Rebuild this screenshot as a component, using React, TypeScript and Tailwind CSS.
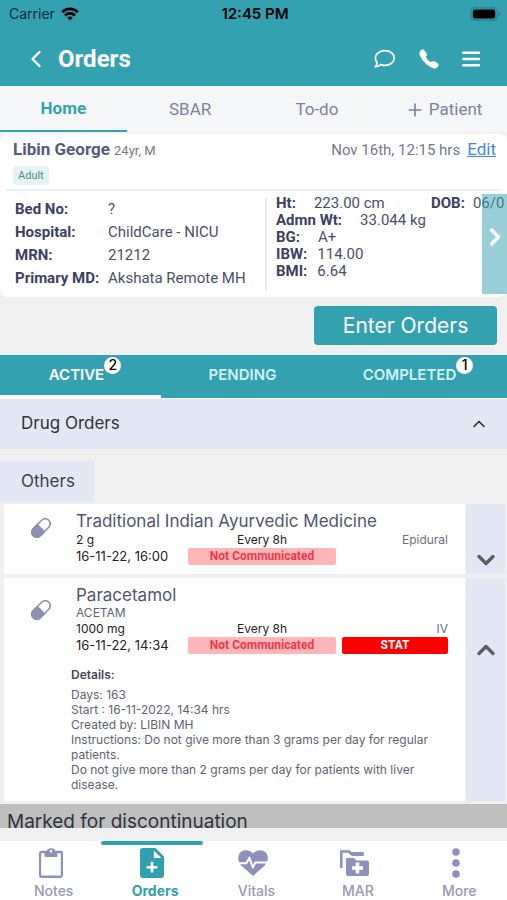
import React from "react";
import { IoCall } from "react-icons/io5";
import { ChevronDown, ChevronLeft, ChevronRight, ChevronUp, Plus } from "lucide-react";

const inter = "font-['Inter',sans-serif]";
const roboto = "font-['Roboto',sans-serif]";

function WifiIcon() {
  return (
    <svg viewBox="0 0 18 14" className="h-[14px] w-[18px]" aria-hidden="true">
      <g fill="none" stroke="#000" strokeWidth="2.7">
        <path d="M1.2 5.2 A11 11 0 0 1 16.8 5.2" />
        <path d="M4 8.5 A7.1 7.1 0 0 1 14 8.5" />
      </g>
      <path d="M9 13.6 L6.2 10.8 A4 4 0 0 1 11.8 10.8 Z" />
    </svg>
  );
}

function BatteryIcon() {
  return (
    <svg viewBox="0 0 31 14" className="h-[14px] w-[31px]" aria-hidden="true">
      <rect x="0.8" y="0.8" width="26.4" height="12.4" rx="4" fill="none" stroke="#23808c" strokeWidth="1.2" />
      <rect x="2.8" y="2.6" width="22.4" height="8.8" rx="2.2" />
      <path d="M28.6 4.8 Q30.6 5.6 30.6 7 T28.6 9.2Z" fill="#23808c" />
    </svg>
  );
}

function ChatIcon() {
  return (
    <svg viewBox="0 0 22 20" className="h-5 w-[22px]" fill="none" aria-hidden="true">
      <path
        d="M11 1.6 C16 1.6 20.2 4.8 20.2 9 S16 16.4 11 16.4 C9.4 16.4 8 16.1 6.8 15.6 C5.2 16.9 3.2 17.8 1.3 17.8 C2.3 16.7 3 15.1 3.1 13.6 C2 12.4 1.4 10.8 1.4 9 C1.4 4.8 6 1.6 11 1.6Z"
        stroke="currentColor"
        strokeWidth="1.7"
        strokeLinejoin="round"
      />
    </svg>
  );
}

function MenuIcon() {
  return (
    <svg viewBox="0 0 18 16" className="h-4 w-[18px]" aria-hidden="true">
      <path d="M1 1.8 H17 M1 8 H17 M1 14.2 H17" stroke="currentColor" strokeWidth="2.4" strokeLinecap="round" />
    </svg>
  );
}

function PillIcon() {
  return (
    <svg viewBox="0 0 20 20" className="h-5 w-5" aria-hidden="true">
      <g transform="rotate(-45 10 10)">
        <rect x="-1" y="5" width="22" height="10" rx="5" fill="none" stroke="#8d90b4" strokeWidth="1.6" />
        <path d="M10.5 4.2 H4 A5.8 5.8 0 0 0 4 15.8 H10.5Z" fill="#8d90b4" />
      </g>
    </svg>
  );
}

function NotesIcon() {
  return (
    <svg viewBox="0 0 24 30" className="h-[30px] w-6" fill="#8d91bb" aria-hidden="true">
      <path
        fillRule="evenodd"
        d="M2.4 2.8 H7.6 A4.6 3.6 0 0 1 16.4 2.8 H21.6 A2.4 2.4 0 0 1 24 5.2 V27.6 A2.4 2.4 0 0 1 21.6 30 H2.4 A2.4 2.4 0 0 1 0 27.6 V5.2 A2.4 2.4 0 0 1 2.4 2.8Z M2.2 5.2 V27.6 H21.8 V5.2 H18.4 V9 H5.6 V5.2Z M12 2 A1.3 1.3 0 1 0 12 4.6 A1.3 1.3 0 1 0 12 2Z"
      />
    </svg>
  );
}

function OrdersIcon() {
  return (
    <svg viewBox="0 0 24 30" className="h-[30px] w-6" aria-hidden="true">
      <path fill="#30a0ae" d="M3 0 H15.5 L24 8.5 V27 A3 3 0 0 1 21 30 H3 A3 3 0 0 1 0 27 V3 A3 3 0 0 1 3 0Z" />
      <path fill="#fff" d="M13.8 2.4 V10 H21.4Z" />
      <path d="M12 13.8 V24.6 M6.6 19.2 H17.4" stroke="#fff" strokeWidth="2.6" />
    </svg>
  );
}

function VitalsIcon() {
  return (
    <svg viewBox="0 0 30 26" className="h-[26px] w-[30px]" aria-hidden="true">
      <path
        fill="#8d91bb"
        d="M15 26 L3.2 15.4 C-.6 11.6 -.6 5.6 2.2 2.6 C5.8 -1 11.4 -.4 15 3.4 C18.6 -.4 24.2 -1 27.8 2.6 C30.6 5.6 30.6 11.6 26.8 15.4Z"
      />
      <path
        d="M-1 13.2 H8.4 L11.4 7.6 L14.8 17.6 L17.4 12.4 H31"
        fill="none"
        stroke="#fff"
        strokeWidth="2"
        strokeLinejoin="round"
      />
    </svg>
  );
}

function MarIcon() {
  return (
    <svg viewBox="0 0 29 26" className="h-[26px] w-[29px]" aria-hidden="true">
      <path d="M1.3 18 V1.5 H9 L11.5 4 H23.5" fill="none" stroke="#8d91bb" strokeWidth="2.6" />
      <path
        fill="#8d91bb"
        d="M7 8 H14 L16.5 10.5 H27 A2 2 0 0 1 29 12.5 V24 A2 2 0 0 1 27 26 H8 A2 2 0 0 1 6 24 V9 A1 1 0 0 1 7 8Z M9 2 H23.6 V6 H12Z"
      />
      <path d="M17.5 12.5 V23.5 M12 18 H23" stroke="#fff" strokeWidth="3.6" />
    </svg>
  );
}

function MoreIcon() {
  return (
    <svg viewBox="0 0 8 30" className="h-[30px] w-2" fill="#8d91bb" aria-hidden="true">
      <circle cx="4" cy="4" r="3.8" />
      <circle cx="4" cy="15" r="3.8" />
      <circle cx="4" cy="26" r="3.8" />
    </svg>
  );
}

function Header() {
  return (
    <header className="shrink-0 bg-[#34a1b1]">
      <div className="grid h-7 grid-cols-3 items-center pr-[6px] pl-[9px] text-sm text-[#0b2b33]">
        <span className="flex items-center gap-[6px]">
          Carrier <WifiIcon />
        </span>
        <span className="text-center text-[15px] font-semibold text-black">12:45 PM</span>
        <span className="justify-self-end">
          <BatteryIcon />
        </span>
      </div>
      <div className="flex h-[58px] items-center pt-1 pr-[27px] pl-[22px] text-white">
        <button type="button" aria-label="Back">
          <ChevronLeft size={28} strokeWidth={2} />
        </button>
        <h1 className={`${roboto} ml-2 flex-1 text-2xl font-bold`}>Orders</h1>
        <div className="flex items-center gap-[22px]">
          <button type="button" aria-label="Chat">
            <ChatIcon />
          </button>
          <button type="button" aria-label="Call">
            <IoCall size={22} />
          </button>
          <button type="button" aria-label="Menu">
            <MenuIcon />
          </button>
        </div>
      </div>
    </header>
  );
}

function PageTabs() {
  return (
    <nav className={`${roboto} grid h-[46px] shrink-0 grid-cols-4 bg-[#f4f6f8] text-[17px] text-[#7d81a5]`}>
      <button type="button" className="border-b-2 border-[#34a1b1] pt-[2px] font-bold text-[#34a1b1]">
        Home
      </button>
      <button type="button" className="pt-[2px]">SBAR</button>
      <button type="button" className="pt-[2px]">To-do</button>
      <button type="button" className="flex items-center justify-center gap-1 pt-[2px]">
        <Plus size={20} strokeWidth={2} /> Patient
      </button>
    </nav>
  );
}

const identity = [
  ["Bed No:", "?"],
  ["Hospital:", "ChildCare - NICU"],
  ["MRN:", "21212"],
  ["Primary MD:", "Akshata Remote MH"],
];

function PatientCard() {
  return (
    <section className={`${roboto} mt-[2px] rounded-lg bg-white pb-[3px] text-[#4b5065]`}>
      <div className="flex justify-between pt-[3px] pr-[11px] pl-[13px]">
        <div>
          <h2 className="text-[17px] leading-6 font-bold text-[#555b80]">
            Libin George <span className="text-[13px] font-normal text-[#74788a]">24yr, M</span>
          </h2>
          <p className="mt-[3px] w-fit rounded-sm bg-[#e6f3f3] px-[5px] text-[11px] leading-[19px] text-[#449488]">
            Adult
          </p>
        </div>
        <p className="flex items-baseline gap-[7px] text-[15px] leading-6 text-[#74788a]">
          Nov 16th, 12:15 hrs
          <a href="#edit" className="text-[17px] text-[#4285f4] underline">
            Edit
          </a>
        </p>
      </div>
      <div className="mx-[6px] mt-1 border-t-2 border-[#e8effa]" />
      <div className="flex">
        <dl className="mt-[7px] flex-1 pl-[15px] text-[15px] leading-[23px]">
          {identity.map(([term, value]) => (
            <div key={term} className="flex">
              <dt className="w-[93px] font-bold whitespace-nowrap text-[#3c4162]">{term}</dt>
              <dd className="whitespace-nowrap">{value}</dd>
            </div>
          ))}
        </dl>
        <div className="relative mt-[3px] flex h-[100px] w-[242px] shrink-0">
          <div className="mt-1 h-[92px] w-[2px] bg-[#e6e9f5]" />
          <dl className="w-[164px] shrink-0 pt-px pl-[9px] text-[15px] leading-[17px] [&_dt]:font-bold [&_dt]:text-[#3c4162]">
            <div className="flex gap-[18px]">
              <dt>Ht:</dt>
              <dd>223.00 cm</dd>
            </div>
            <div className="flex gap-[18px]">
              <dt>Admn Wt:</dt>
              <dd>33.044 kg</dd>
            </div>
            <div className="flex gap-[18px]">
              <dt>BG:</dt>
              <dd>A+</dd>
            </div>
            <div className="flex gap-[10px]">
              <dt>IBW:</dt>
              <dd>114.00</dd>
            </div>
            <div className="flex gap-[10px]">
              <dt>BMI:</dt>
              <dd>6.64</dd>
            </div>
          </dl>
          <dl className="flex gap-2 pt-px text-[15px] leading-[17px]">
            <dt className="font-bold text-[#3c4162]">DOB:</dt>
            <dd>06/0</dd>
          </dl>
          <button
            type="button"
            aria-label="Next details"
            className="absolute top-0 right-0 flex h-[100px] w-[25px] items-center justify-center bg-[#34a1b1]/50 pb-[14px] text-white"
          >
            <ChevronRight size={28} strokeWidth={3} className="shrink-0" />
          </button>
        </div>
      </div>
    </section>
  );
}

function CountBadge({ count }: { count: number }) {
  return (
    <span className="absolute -top-2 left-full flex h-[17px] w-[17px] items-center justify-center rounded-full bg-white text-sm font-medium text-black">
      {count}
    </span>
  );
}

function StatusTabs() {
  return (
    <nav className="grid h-11 grid-cols-[161fr_163fr_183fr] border-b border-white bg-[#34a1b1] text-[15px] font-semibold text-[#d3f1f4]">
      <button type="button" className="border-b-3 border-white pr-2 text-white">
        <span className="relative">
          ACTIVE
          <CountBadge count={2} />
        </span>
      </button>
      <button type="button" className="border-b-3 border-transparent">
        PENDING
      </button>
      <button type="button" className="border-b-3 border-transparent pr-3">
        <span className="relative">
          COMPLETED
          <CountBadge count={1} />
        </span>
      </button>
    </nav>
  );
}

type Order = {
  name: string;
  generic?: string;
  dose: string;
  time: string;
  route: string;
  stat?: boolean;
  details?: string[];
};

const orders: Order[] = [
  { name: "Traditional Indian Ayurvedic Medicine", dose: "2 g", time: "16-11-22, 16:00", route: "Epidural" },
  {
    name: "Paracetamol",
    generic: "ACETAM",
    dose: "1000 mg",
    time: "16-11-22, 14:34",
    route: "IV",
    stat: true,
    details: [
      "Days: 163",
      "Start : 16-11-2022, 14:34 hrs",
      "Created by: LIBIN MH",
      "Instructions: Do not give more than 3 grams per day for regular patients.",
      "Do not give more than 2 grams per day for patients with liver disease.",
    ],
  },
];

function OrderCard({ order }: { order: Order }) {
  return (
    <article className="mr-[2px] ml-1 flex gap-px">
      <div className="min-w-0 flex-1 bg-white pt-[7px] pb-[9px]">
        <div className="flex">
          <div className={order.generic ? "w-[72px] shrink-0 pt-[15px] pl-[27px]" : "w-[72px] shrink-0 pt-[7px] pl-[27px]"}>
            <PillIcon />
          </div>
          <div className="min-w-0 flex-1 pr-[17px]">
            <h3 className="text-[17px] leading-5 text-[#50566e]">{order.name}</h3>
            {order.generic && <p className="text-xs leading-[15px] text-[#60646f]">{order.generic}</p>}
            <div className="grid grid-cols-[106px_148px_1fr] gap-x-[6px] text-xs leading-[17px] text-[#222]">
              <span>{order.dose}</span>
              <span className="text-center">Every 8h</span>
              <span className="text-right text-[#6c707c]">{order.route}</span>
              <span className="text-[13px] leading-[17px] whitespace-nowrap">{order.time}</span>
              <span className={`${roboto} rounded-xs bg-[#ffb6b9] text-center font-bold text-[#f23645]`}>
                Not Communicated
              </span>
              {order.stat && (
                <span className={`${roboto} rounded-xs bg-[#ff0000] text-center font-bold text-white`}>STAT</span>
              )}
            </div>
          </div>
        </div>
        {order.details && (
          <div className="pt-[13px] pr-2 pl-[67px] text-xs leading-[15px] text-[#60646f]">
            <h4 className="mb-[5px] font-semibold text-[#444854]">Details:</h4>
            {order.details.map((line) => (
              <p key={line}>{line}</p>
            ))}
          </div>
        )}
      </div>
      <button
        type="button"
        aria-label={order.details ? "Hide details" : "Show details"}
        className={
          order.details
            ? "flex w-[39px] items-start justify-center bg-[#e3e7f4] pt-[58px] text-[#5b5e66]"
            : "flex w-[39px] items-end justify-center bg-[#e3e7f4] text-[#5b5e66]"
        }
      >
        {order.details ? <ChevronUp size={28} strokeWidth={3} /> : <ChevronDown size={28} strokeWidth={3} />}
      </button>
    </article>
  );
}

const destinations = [
  { label: "Notes", icon: <NotesIcon />, active: false },
  { label: "Orders", icon: <OrdersIcon />, active: true },
  { label: "Vitals", icon: <VitalsIcon />, active: false },
  { label: "MAR", icon: <MarIcon />, active: false },
  { label: "More", icon: <MoreIcon />, active: false },
];

function BottomNav() {
  return (
    <nav className="grid h-[59px] shrink-0 grid-cols-5 bg-white text-sm">
      {destinations.map(({ label, icon, active }) => (
        <button
          key={label}
          type="button"
          className={
            active
              ? "flex flex-col items-center font-bold text-[#30a0ae]"
              : "flex flex-col items-center font-medium text-[#9599b5]"
          }
        >
          <span className={active ? "h-1 w-full rounded-full bg-[#30a0ae]" : "h-1 w-full"} />
          <span className="mt-[3px] flex h-[30px] items-center">{icon}</span>
          <span className="mt-1 pl-[6px] leading-[18px]">{label}</span>
        </button>
      ))}
    </nav>
  );
}

export default function App() {
  return (
    <div className={`${inter} flex h-screen flex-col overflow-hidden bg-[#f0f0f0]`}>
      <Header />
      <PageTabs />
      <main className="min-h-0 flex-1 overflow-hidden">
        <PatientCard />
        <div className="flex justify-end pt-[9px] pr-[10px] pb-[10px]">
          <button type="button" className="h-[39px] w-[183px] rounded-sm bg-[#34a1b1] text-[21px] text-white">
            Enter Orders
          </button>
        </div>
        <StatusTabs />
        <button
          type="button"
          className="flex h-[50px] w-full items-center justify-between bg-[#e3e7f4] pr-[18px] pl-[21px] text-[17px] text-[#30333c]"
        >
          Drug Orders <ChevronUp size={20} strokeWidth={2} />
        </button>
        <h2 className="mt-3 mb-[2px] w-[94px] bg-[#e3e7f4] pl-[21px] text-[17px] leading-[41px] text-[#3c404d]">
          Others
        </h2>
        <div className="flex flex-col gap-1">
          {orders.map((order) => (
            <OrderCard key={order.name} order={order} />
          ))}
        </div>
        <h2 className="mt-[3px] bg-[#bfbfbf] pt-1 pl-[7px] text-[19px] leading-7 text-[#30333c]">
          Marked for discontinuation
        </h2>
      </main>
      <div className="h-[13px] shrink-0" />
      <BottomNav />
    </div>
  );
}
